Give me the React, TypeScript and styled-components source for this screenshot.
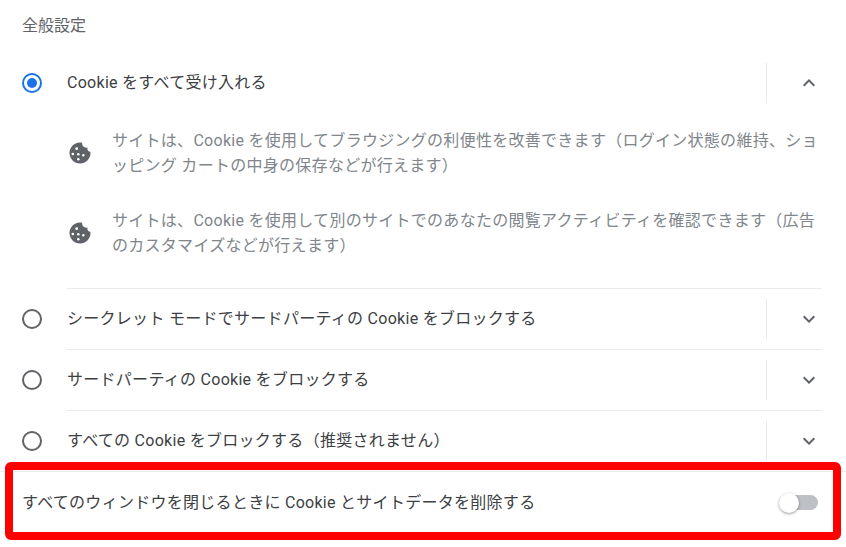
import React from "react";
import styled, { createGlobalStyle } from "styled-components";

const Global = createGlobalStyle`
  html, body { margin: 0; padding: 0; background: #fff; }
  body { font-family: Roboto, "Noto Sans CJK JP", sans-serif; font-size: 16px; letter-spacing: 0.28px; color: #3c4043; }
`;

const Page = styled.div`
  position: relative;
  width: 846px;
  height: 547px;
  overflow: hidden;
  background: #fff;
`;

const Heading = styled.h2`
  margin: 0;
  height: 53px;
  padding: 15px 0 0 22px;
  box-sizing: border-box;
  font-size: 16px;
  font-weight: 400;
  line-height: 22px;
  letter-spacing: 0;
  color: #5f6368;
`;

const Group = styled.div`
  margin: 0 24px 0 22px;
`;

const Option = styled.div`
  display: flex;
  flex-direction: column;
`;

const OptionHead = styled.div`
  display: flex;
  align-items: center;
  height: 61px;
`;

const FirstHead = styled(OptionHead)`
  height: 60px;
`;

const Radio = styled.span<{ $on?: boolean }>`
  flex: none;
  width: 20px;
  height: 20px;
  box-sizing: border-box;
  border-radius: 50%;
  border: 2px solid ${(p) => (p.$on ? "#1a73e8" : "#5f6368")};
  display: flex;
  align-items: center;
  justify-content: center;
  &::after {
    content: "";
    display: ${(p) => (p.$on ? "block" : "none")};
    width: 10px;
    height: 10px;
    border-radius: 50%;
    background: #1a73e8;
  }
`;

const Body = styled.div<{ $line?: boolean }>`
  flex: 1;
  display: flex;
  align-items: center;
  height: 100%;
  margin-left: 25px;
  border-top: ${(p) => (p.$line ? "1px solid #e8eaed" : "none")};
`;

const Label = styled.span`
  flex: 1;
  line-height: 22px;
  color: #3c4043;
`;

const Sep = styled.span`
  width: 1px;
  height: 40px;
  background: #e8eaed;
`;

const Expander = styled.span`
  width: 55px;
  height: 24px;
  display: flex;
  align-items: center;
  justify-content: flex-end;
  padding-right: 1px;
  box-sizing: border-box;
  color: #5f6368;
`;

const Details = styled.div`
  display: flex;
  flex-direction: column;
  gap: 30px;
  padding: 15px 0 30px 45px;
`;

const Detail = styled.div`
  display: flex;
  align-items: center;
  gap: 21px;
`;

const DetailText = styled.p`
  margin: 0;
  flex: 1;
  font-size: 16px;
  line-height: 25px;
  line-break: loose;
  color: #80868b;
`;

const Footer = styled.div`
  display: flex;
  align-items: center;
  justify-content: space-between;
  height: 61px;
  box-sizing: border-box;
  padding: 0 28px 2px 22px;
  border-top: 1px solid #e8eaed;
  color: #3c4043;
`;

const Toggle = styled.span`
  position: relative;
  width: 36px;
  height: 15px;
  margin-top: 2px;
  border-radius: 8px;
  background: #bdc1c6;
`;

const Knob = styled.span`
  position: absolute;
  left: -3px;
  top: -2px;
  width: 20px;
  height: 20px;
  border-radius: 50%;
  background: #fff;
  box-shadow: 0 1px 3px rgba(0, 0, 0, 0.4);
`;

const Highlight = styled.div`
  position: absolute;
  left: 5px;
  top: 462px;
  width: 836px;
  height: 78px;
  box-sizing: border-box;
  border: 8px solid #ff0000;
  border-radius: 6px;
  pointer-events: none;
`;

const Chevron = ({ up }: { up?: boolean }) => (
  <svg width="24" height="24" viewBox="0 0 24 24" fill="currentColor">
    <path d={up ? "M7.41 15.41 12 10.83l4.59 4.58L18 14l-6-6-6 6z" : "M7.41 8.59 12 13.17l4.59-4.58L18 10l-6 6-6-6z"} />
  </svg>
);

const Cookie = () => (
  <svg width="24" height="24" viewBox="0 0 24 24" style={{ flex: "none" }}>
    <path
      fill="#5f6368"
      transform="translate(0.4 -0.6) scale(1.05)"
      d="M21.95 10.99c-1.79-.03-3.7-1.95-2.68-4.22-2.97 1-5.78-1.59-5.19-4.56C7.1.74 2 6.41 2 12c0 5.52 4.48 10 10 10 5.89 0 10.54-5.08 9.95-11.01z"
    />
    <g fill="#fff">
      <circle cx="9.7" cy="7.7" r="1.4" />
      <circle cx="5.8" cy="13" r="1.3" />
      <circle cx="11.3" cy="13.3" r="1.3" />
      <circle cx="16.3" cy="14.3" r="1.2" />
      <circle cx="11.3" cy="18.3" r="1.3" />
    </g>
  </svg>
);

const rows = [
  "シークレット モードでサードパーティの Cookie をブロックする",
  "サードパーティの Cookie をブロックする",
  "すべての Cookie をブロックする（推奨されません）",
];

export default function App() {
  return (
    <Page>
      <Global />
      <Heading>全般設定</Heading>
      <Group>
        <Option>
          <FirstHead>
            <Radio $on />
            <Body>
              <Label>Cookie をすべて受け入れる</Label>
              <Sep />
              <Expander><Chevron up /></Expander>
            </Body>
          </FirstHead>
          <Details>
            <Detail>
              <Cookie />
              <DetailText>サイトは、Cookie を使用してブラウジングの利便性を改善できます（ログイン状態の維持、ショッピング カートの中身の保存などが行えます）</DetailText>
            </Detail>
            <Detail>
              <Cookie />
              <DetailText>サイトは、Cookie を使用して別のサイトでのあなたの閲覧アクティビティを確認できます（広告のカスタマイズなどが行えます）</DetailText>
            </Detail>
          </Details>
        </Option>
        {rows.map((label) => (
          <Option key={label}>
            <OptionHead>
              <Radio />
              <Body $line>
                <Label>{label}</Label>
                <Sep />
                <Expander><Chevron /></Expander>
              </Body>
            </OptionHead>
          </Option>
        ))}
      </Group>
      <Footer>
        <span>すべてのウィンドウを閉じるときに Cookie とサイトデータを削除する</span>
        <Toggle><Knob /></Toggle>
      </Footer>
      <Highlight />
    </Page>
  );
}
